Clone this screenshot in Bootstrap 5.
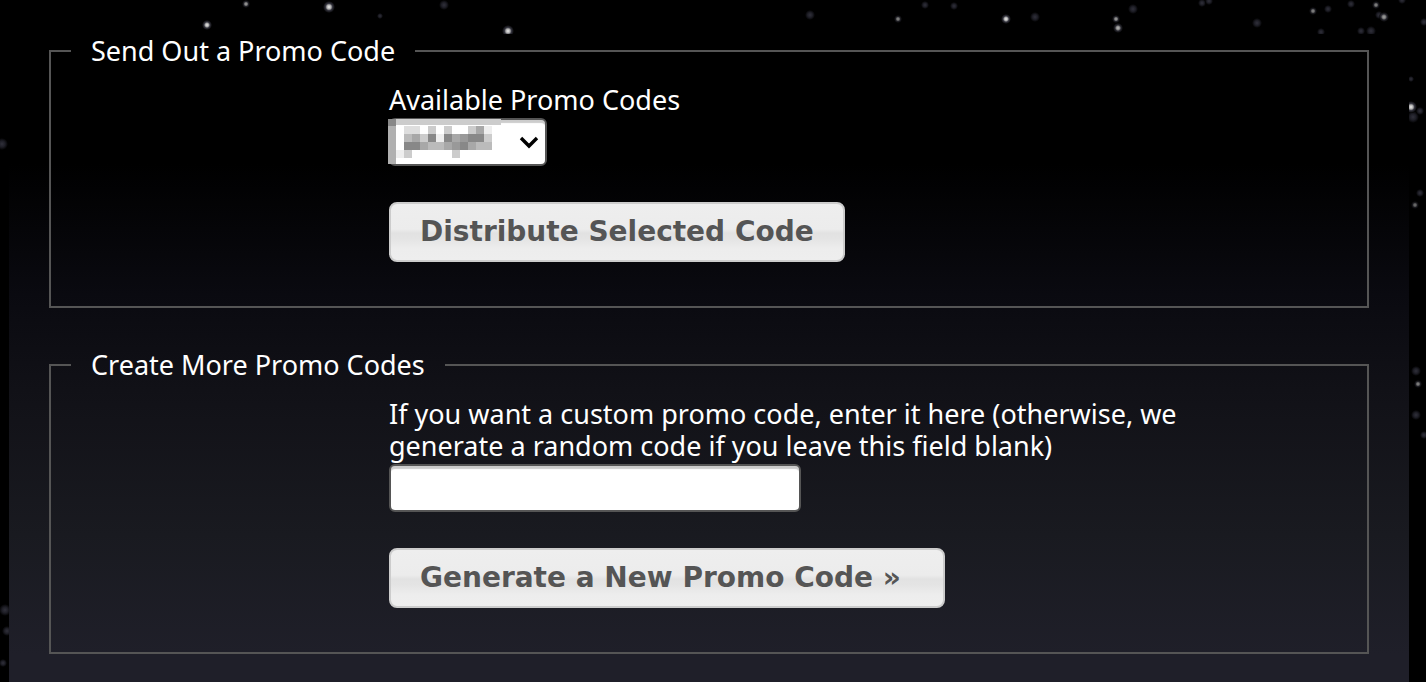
<!DOCTYPE html>
<html lang="en">
<head>
<meta charset="utf-8">
<meta name="viewport" content="width=device-width, initial-scale=1">
<title>Promo Codes</title>
<link href="https://cdn.jsdelivr.net/npm/bootstrap@5.3.0/dist/css/bootstrap.min.css" rel="stylesheet">
<style>
  body {
    background: #000;
    color: #fff;
    font-family: "Lucida Grande", "Noto Sans", sans-serif;
    font-size: 27px;
    line-height: 32px;
  }
  .starfield { z-index: -1; height: 682px; }
  .page-panel {
    margin: 34px 17px 0 9px;
    padding: 1px 40px 26px;
    min-height: calc(100vh - 34px);
    background: linear-gradient(#000 0, #000 130px, #0a0a10 260px, #121218 370px, #191a20 500px, #1f1f29 620px);
  }
  .promo-box { border: 2px solid #555; padding: 17px 20px 44px; }
  .promo-box + .promo-box { margin-top: 41px; }
  .promo-title { padding: 0 20px; font-size: 27px; line-height: 32px; }
  .promo-body { margin-left: 318px; max-width: 820px; }
  .promo-body label { margin-bottom: 2px; }
  .code-field {
    height: 48px;
    border: 2px solid #555;
    border-radius: 6px;
    background-color: #fff;
    box-shadow: inset 0 4px 1px -1px #ccc;
    font-size: 24px;
  }
  .code-pick, .code-pick select { width: 158px; }
  .code-pick select { appearance: none; }
  .code-entry { width: 412px; max-width: 100%; }
  .promo-btn {
    height: 60px;
    margin-top: 36px;
    padding: 0 29px;
    border: 2px solid #ccc;
    border-radius: 8px;
    --bs-btn-color: #555;
    --bs-btn-hover-color: #333;
    background: linear-gradient(#eee 0, #ececec 45%, #e2e2e2 52%, #e4e4e4 62%, #ededed 80%, #eee 100%);
    font: bold 28px/32px Verdana, "DejaVu Sans", sans-serif;
  }
  .promo-btn-wide { width: 556px; max-width: 100%; }
</style>
</head>
<body>
<svg class="starfield position-absolute top-0 start-0 w-100" viewBox="0 0 1426 682" preserveAspectRatio="xMaxYMin slice" aria-hidden="true">
  <defs>
    <radialGradient id="star"><stop offset="0" stop-color="#eee"/><stop offset=".35" stop-color="#aaa"/><stop offset=".6" stop-color="#33333d"/><stop offset="1" stop-color="#000"/></radialGradient>
    <radialGradient id="dim"><stop offset="0" stop-color="#30303a"/><stop offset=".5" stop-color="#1e1e26"/><stop offset="1" stop-color="#000"/></radialGradient>
  </defs>
  <g fill="url(#dim)">
    <circle cx="380" cy="16" r="3"/><circle cx="444" cy="5" r="5"/>
    <circle cx="810" cy="15" r="5"/><circle cx="925" cy="5" r="4"/><circle cx="954" cy="6" r="4"/><circle cx="1035" cy="17" r="5"/>
    <circle cx="1133" cy="9" r="5"/><circle cx="1202" cy="3" r="4"/><circle cx="1209" cy="1" r="4"/><circle cx="1257" cy="23" r="5"/>
    <circle cx="1328" cy="9" r="4"/><circle cx="1351" cy="4" r="4"/><circle cx="1379" cy="15" r="4"/><circle cx="1371" cy="31" r="5"/>
    <circle cx="1361" cy="31" r="4"/><circle cx="1321" cy="32" r="4"/><circle cx="1402" cy="0" r="4"/><circle cx="1424" cy="22" r="4"/>
    <circle cx="1413" cy="117" r="6"/><circle cx="1420" cy="111" r="4"/><circle cx="1420" cy="193" r="4"/><circle cx="1411" cy="79" r="3"/>
    <circle cx="1416" cy="371" r="5"/><circle cx="1416" cy="415" r="5"/><circle cx="1424" cy="435" r="4"/>
    <circle cx="2" cy="144" r="6"/><circle cx="5" cy="610" r="6"/><circle cx="7" cy="631" r="5"/><circle cx="3" cy="663" r="4"/>
  </g>
  <g fill="url(#star)">
    <circle cx="329" cy="7" r="6"/><circle cx="207" cy="25" r="5"/><circle cx="246" cy="4" r="4" opacity=".7"/>
    <circle cx="508" cy="31" r="6"/><circle cx="1006" cy="19" r="5"/><circle cx="898" cy="19" r="4" opacity=".6"/>
    <circle cx="1116" cy="19" r="4" opacity=".7"/><circle cx="1118" cy="28" r="5" opacity=".8"/><circle cx="1313" cy="11" r="4" opacity=".6"/>
    <circle cx="1376" cy="5" r="4" opacity=".6"/><circle cx="1384" cy="17" r="5" opacity=".7"/><circle cx="1411" cy="107" r="6"/>
    <circle cx="1415" cy="205" r="4" opacity=".5"/><circle cx="1418" cy="384" r="4" opacity=".6"/>
  </g>
</svg>

<main class="page-panel">
  <form>
    <fieldset class="promo-box">
      <legend class="promo-title float-none w-auto mb-0">Send Out a Promo Code</legend>
      <div class="promo-body">
        <label class="d-block" for="available">Available Promo Codes</label>
        <div class="code-pick position-relative">
          <select class="code-field d-block" id="available" name="available"><option value="" selected></option></select>
          <svg class="position-absolute top-0 start-0 pe-none" width="158" height="48" viewBox="1 0 158 48" overflow="visible" aria-hidden="true">
            <!-- Obscured code: 8px blocks -->
            <g shape-rendering="crispEdges">
              <path fill="#ccc" d="M8 1h105v6H8z"/><path fill="#b0b0b0" d="M0 8h8v38H0z"/><path fill="#888" d="M0 1h8v7H0z"/>
              <path fill="#dedede" d="M16 8h16v8H16z"/>
              <path fill="#ccc" d="M40 8h8v8h-8zM56 8h8v8h-8zM80 8h8v8h-8zM32 16h8v8h-8zM96 16h8v8h-8zM16 32h8v8h-8zM64 32h8v8h-8z"/>
              <path fill="#eee" d="M96 8h8v8h-8zM48 16h8v8h-8zM8 32h8v8H8z"/>
              <path fill="#a8a8a8" d="M88 8h8v8h-8zM24 16h8v8h-8zM64 16h8v8h-8zM88 24h0zM56 24h8v8h-8zM80 24h8v8h-8zM32 24h8v8h-8z"/>
              <path fill="#bbb" d="M16 16h8v8h-8zM40 24h16v8H40zM88 24h16v8H88z"/>
              <path fill="#888" d="M40 16h8v8h-8zM56 16h8v8h-8zM80 16h16v8H80zM16 24h16v8H16zM72 24h8v8h-8z"/>
              <path fill="#999" d="M72 16h8v8h-8zM64 24h8v8h-8z"/>
            </g>
            <path d="M133 20l8 8 8-8" fill="none" stroke="#000" stroke-width="3.4"/>
          </svg>
        </div>
        <button class="btn promo-btn d-block" type="button">Distribute Selected Code</button>
      </div>
    </fieldset>

    <fieldset class="promo-box">
      <legend class="promo-title float-none w-auto mb-0">Create More Promo Codes</legend>
      <div class="promo-body">
        <label class="d-block" for="custom">If you want a custom promo code, enter it here (otherwise, we generate a random code if you leave this field blank)</label>
        <input class="code-field code-entry d-block px-2" id="custom" name="custom" type="text">
        <button class="btn promo-btn promo-btn-wide d-block text-start" type="submit">Generate a New Promo Code »</button>
      </div>
    </fieldset>
  </form>
</main>
<script src="https://cdn.jsdelivr.net/npm/bootstrap@5.3.0/dist/js/bootstrap.bundle.min.js"></script>
</body>
</html>
